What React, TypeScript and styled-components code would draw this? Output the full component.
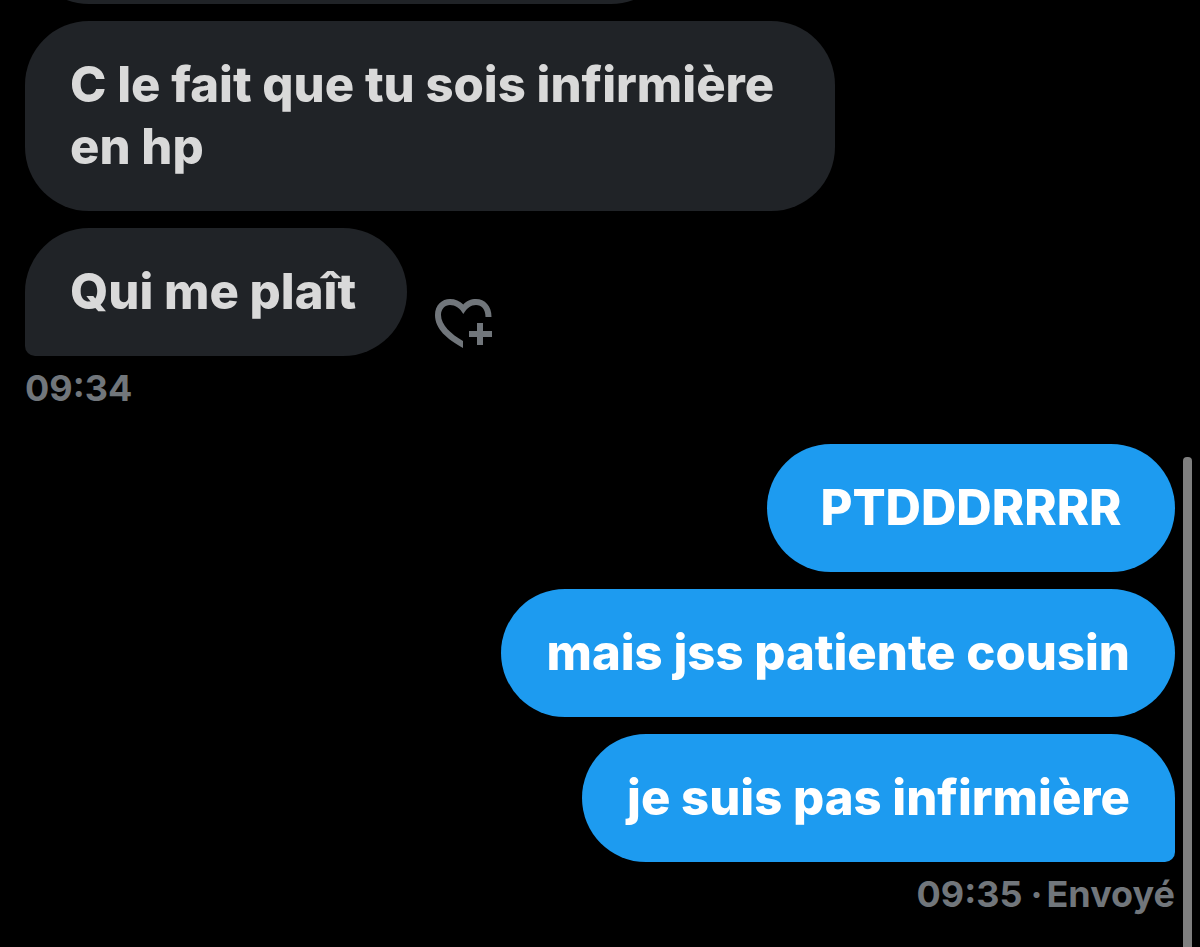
import React from 'react';
import styled, { createGlobalStyle } from 'styled-components';

const Global = createGlobalStyle`
  body { margin: 0; background: #000; font-family: Inter, "Noto Sans", sans-serif; }
`;

const Screen = styled.main`
  position: relative;
  box-sizing: border-box;
  height: 100vh;
  overflow: hidden;
  padding: 0 25px;
  background: #000;
`;

const Thread = styled.div`
  display: flex;
  flex-direction: column;
  gap: 17px;
`;

const Row = styled.div<{ $sent?: boolean }>`
  display: flex;
  align-items: flex-end;
  justify-content: ${(p) => (p.$sent ? 'flex-end' : 'flex-start')};
  gap: 28px;
`;

const Bubble = styled.p<{ $sent?: boolean; $last?: boolean }>`
  box-sizing: border-box;
  margin: 0;
  min-width: ${(p) => (p.$sent ? '408px' : '382px')};
  max-width: 810px;
  padding: 33px 45px;
  border-radius: ${(p) =>
    p.$last ? (p.$sent ? '64px 64px 10px 64px' : '64px 64px 64px 10px') : '64px'};
  background: ${(p) => (p.$sent ? '#1d9bf0' : '#202327')};
  color: ${(p) => (p.$sent ? '#fff' : '#d9d9d9')};
  font-size: 49px;
  font-weight: 800;
  line-height: 62px;
  text-align: ${(p) => (p.$sent ? 'center' : 'left')};
`;

const Previous = styled.div`
  width: 650px;
  max-width: 100%;
  height: 4px;
  overflow: hidden;
  display: flex;
  align-items: flex-end;
  &::before {
    content: '';
    flex: 1;
    height: 128px;
    border-radius: 64px;
    background: #202327;
  }
`;

const Meta = styled.div<{ $sent?: boolean }>`
  display: flex;
  justify-content: ${(p) => (p.$sent ? 'flex-end' : 'flex-start')};
  padding-bottom: 24px;
  color: #71767b;
  font-size: 36px;
  font-weight: 700;
  line-height: 30px;
`;

const Dot = styled.span`
  margin: 0 4px 0 8px;
`;

const ReactButton = styled.button`
  padding: 0 0 6px;
  border: 0;
  background: none;
  color: #71767b;
  cursor: pointer;
`;

const HeartPlus = styled.svg`
  display: block;
  width: 58px;
  height: 52px;
  fill: currentColor;
`;

const Scrollbar = styled.div`
  position: absolute;
  top: 457px;
  right: 8px;
  bottom: 0;
  width: 9px;
  border-radius: 4px 4px 0 0;
  background: #7f7f7f;
`;

export default function App() {
  return (
    <Screen>
      <Global />
      <Thread>
        <Previous />
        <Row><Bubble>C le fait que tu sois infirmière en hp</Bubble></Row>
        <Row>
          <Bubble $last>Qui me plaît</Bubble>
          <ReactButton aria-label="Réagir">
            <HeartPlus viewBox="0 0 58 52">
              <path d="M28 50C12 41 0 31 0 17C0 7 7 1 15 1C20 1 25 3 28.300 6.500C31 3 36 1 41 1C50 1 56.500 8 56.500 19H50.500C50.500 11 46.500 7 41 7C36 7 32 10 28.300 16C25 10 20 7 15 7C10 7 6 11 6 17C6 27 16 36 28 43Z" />
              <path d="M42 25H48V33H57V39H48V47H42V39H34V33H42Z" />
            </HeartPlus>
          </ReactButton>
        </Row>
        <Meta>09:34</Meta>
        <Row $sent><Bubble $sent>PTDDDRRRR</Bubble></Row>
        <Row $sent><Bubble $sent>mais jss patiente cousin</Bubble></Row>
        <Row $sent><Bubble $sent $last>je suis pas infirmière</Bubble></Row>
        <Meta $sent>09:35<Dot>·</Dot>Envoyé</Meta>
      </Thread>
      <Scrollbar />
    </Screen>
  );
}
